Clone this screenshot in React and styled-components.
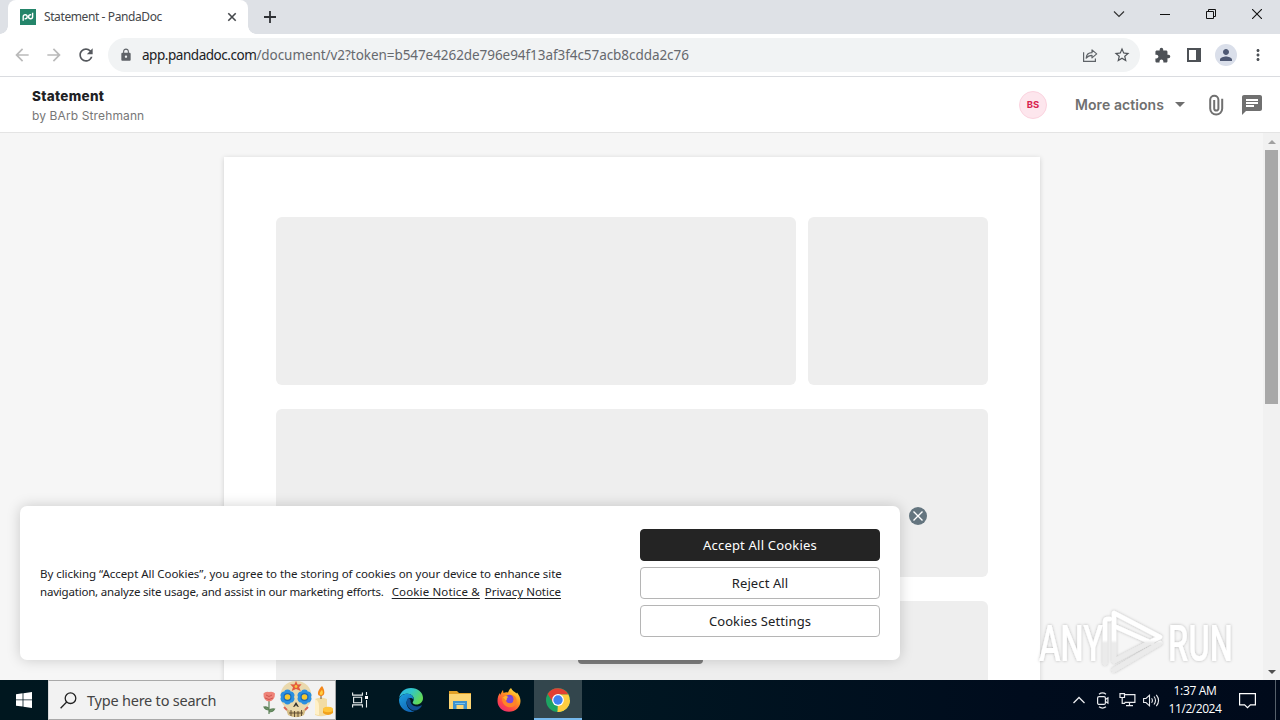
import React from "react";
import styled, { createGlobalStyle } from "styled-components";
import {
  MdArrowBack,
  MdArrowForward,
  MdRefresh,
  MdLock,
  MdStarBorder,
  MdExtension,
  MdPerson,
  MdMoreVert,
  MdChat,
} from "react-icons/md";

const GlobalStyle = createGlobalStyle`
  * {
    box-sizing: border-box;
  }
  body {
    margin: 0;
    overflow: hidden;
    font-family: "Noto Sans", "Open Sans", sans-serif;
  }
  svg {
    display: block;
    flex: none;
  }
`;

const Screen = styled.div`
  position: relative;
  width: 1280px;
  height: 720px;
  display: flex;
  flex-direction: column;
  overflow: hidden;
  background: #fff;
`;

// Single line of text, spacing differs from one label to the next
const Label = styled.span`
  display: block;
  margin: 0;
  white-space: pre;
  flex: none;
  font-size: ${(p) => p.$size || 12}px;
  line-height: ${(p) => p.$line || 16}px;
  letter-spacing: ${(p) => p.$spacing || 0}px;
  color: ${(p) => p.$color || "#202124"};
  font-weight: ${(p) => p.$weight || 400};
`;

/* ---------- Browser ---------- */

const TabStrip = styled.div`
  height: 34px;
  flex: none;
  display: flex;
  align-items: stretch;
  justify-content: space-between;
  background: #dee1e6;
  padding-left: 8px;
`;

const TabGroup = styled.div`
  display: flex;
  align-items: center;
`;

const Tab = styled.div`
  position: relative;
  width: 240px;
  height: 34px;
  display: flex;
  align-items: center;
  padding: 0 10px 0 12px;
  background: #fff;
  border-radius: 8px 8px 0 0;
  &::before,
  &::after {
    content: "";
    position: absolute;
    bottom: 0;
    width: 8px;
    height: 8px;
  }
  &::before {
    left: -8px;
    background: radial-gradient(circle at 0 0, transparent 7.5px, #fff 8px);
  }
  &::after {
    right: -8px;
    background: radial-gradient(circle at 100% 0, transparent 7.5px, #fff 8px);
  }
`;

const TabTitle = styled.div`
  flex: 1;
  padding-left: 8px;
`;

const NewTab = styled.div`
  margin-left: 15px;
`;

const WindowButtons = styled.div`
  display: flex;
  align-items: center;
  height: 28px;
  & > div {
    width: 46px;
    display: flex;
    justify-content: center;
  }
`;

const Toolbar = styled.div`
  height: 43px;
  flex: none;
  display: flex;
  align-items: center;
  border-bottom: 1px solid #dadce0;
  background: #fff;
`;

const NavButtons = styled.div`
  display: flex;
  gap: 12px;
  width: 108px;
  padding-left: 12px;
`;

const AddressBar = styled.div`
  width: 1032px;
  height: 34px;
  border-radius: 17px;
  background: #f1f3f4;
  display: flex;
  align-items: center;
  padding: 0 9px 0 11px;
`;

const Url = styled.div`
  display: flex;
  flex: 1;
  padding-left: 9px;
`;

const AddressActions = styled.div`
  display: flex;
  align-items: center;
  gap: 15px;
`;

const ToolbarActions = styled.div`
  flex: 1;
  display: grid;
  grid-template-columns: repeat(4, 32px);
  align-items: center;
  justify-items: center;
  padding-left: 6px;
`;

const Profile = styled.div`
  width: 22px;
  height: 22px;
  border-radius: 50%;
  background: #dadfea;
  display: flex;
  align-items: center;
  justify-content: center;
`;

/* ---------- Document ---------- */

const Header = styled.header`
  height: 56px;
  flex: none;
  display: flex;
  align-items: center;
  justify-content: space-between;
  padding: 0 16px 0 32px;
  border-bottom: 1px solid #e4e4e4;
  background: #fff;
  font-family: Inter, "Noto Sans", sans-serif;
`;

const HeaderTitle = styled.div`
  display: flex;
  flex-direction: column;
  gap: 3px;
  padding-top: 3px;
`;

const HeaderActions = styled.div`
  display: flex;
  align-items: center;
`;

const Avatar = styled.div`
  width: 28px;
  height: 28px;
  border-radius: 50%;
  border: 1px solid #fbd3df;
  background: #fde6ed;
  display: flex;
  align-items: center;
  justify-content: center;
  margin-right: 28px;
`;

const ActionsLabel = styled.div`
  width: 89px;
`;

const Caret = styled.div`
  border: 5px solid transparent;
  border-top-color: #6e6e6e;
  border-bottom: 0;
  margin: 0 21px 0 11px;
`;

const Clip = styled.div`
  margin-right: 14px;
`;

const Viewport = styled.main`
  height: 547px;
  flex: none;
  display: flex;
  background: #f6f6f6;
  overflow: hidden;
`;

const Canvas = styled.div`
  flex: 1;
  display: flex;
  justify-content: center;
  align-items: flex-start;
  padding: 24px 0 0 1px;
`;

const Sheet = styled.div`
  width: 816px;
  height: 1056px;
  padding: 60px 52px;
  background: #fff;
  box-shadow: 0 1px 5px rgba(0, 0, 0, 0.16);
  display: flex;
  flex-direction: column;
  gap: 24px;
`;

const SkeletonRow = styled.div`
  display: flex;
  gap: 12px;
`;

const Skeleton = styled.div`
  width: ${(p) => p.$width}px;
  height: 168px;
  border-radius: 6px;
  background: #eee;
`;

const Scrollbar = styled.div`
  width: 17px;
  background: #f1f1f1;
  display: flex;
  flex-direction: column;
  align-items: center;
`;

const ScrollArrow = styled.div`
  height: 17px;
  display: flex;
  align-items: center;
`;

const Thumb = styled.div`
  width: 13px;
  height: 254px;
  margin-bottom: auto;
  background: #a8a8a8;
`;

/* ---------- Overlays ---------- */

const Toast = styled.div`
  position: absolute;
  left: 578px;
  top: 624px;
  width: 125px;
  height: 40px;
  border-radius: 4px;
  background: #7d7d7d;
`;

const CookieBanner = styled.section`
  position: absolute;
  left: 20px;
  top: 506px;
  width: 880px;
  height: 154px;
  border-radius: 7px;
  background: #fff;
  box-shadow: 0 0 14px rgba(0, 0, 0, 0.18);
  display: flex;
  justify-content: space-between;
  padding: 23px 20px;
`;

const CookieText = styled.div`
  padding-top: 36px;
`;

const CookieLine = styled.div`
  display: flex;
`;

const CookieLink = styled(Label)`
  margin-left: ${(p) => p.$gap}px;
  text-decoration: underline;
  text-underline-offset: 2px;
`;

const CookieButtons = styled.div`
  display: flex;
  flex-direction: column;
  gap: 6px;
`;

const CookieButton = styled.button`
  width: 240px;
  height: 32px;
  padding: 0;
  border: 1px solid ${(p) => (p.$dark ? "#242424" : "#b5b5b5")};
  border-radius: 4px;
  background: ${(p) => (p.$dark ? "#242424" : "#fff")};
  font-family: inherit;
  display: flex;
  align-items: center;
  justify-content: center;
`;

const CloseBadge = styled.div`
  position: absolute;
  left: 909px;
  top: 507px;
`;

const Watermark = styled.div`
  position: absolute;
  left: 1030px;
  top: 602px;
`;

/* ---------- Taskbar ---------- */

const Taskbar = styled.footer`
  height: 40px;
  flex: none;
  display: flex;
  background: linear-gradient(90deg, #00171f 0%, #001722 45%, #000c1d 80%, #000a1b 100%);
`;

const TaskButton = styled.div`
  width: ${(p) => p.$width || 49}px;
  height: 40px;
  display: flex;
  align-items: center;
  justify-content: center;
  background: ${(p) => (p.$active ? "#33464d" : "transparent")};
  border-bottom: ${(p) => (p.$active ? "2px solid #76b9ed" : "2px solid transparent")};
  padding-top: 2px;
`;

const SearchBox = styled.div`
  width: 288px;
  height: 40px;
  background: #f2f2f2;
  border: 1px solid #a9a9a9;
  border-left-color: #d8d8d8;
  display: flex;
  align-items: center;
  padding-left: 11px;
  overflow: hidden;
`;

const SearchText = styled.div`
  width: 185px;
  flex: none;
  padding-left: 10px;
`;

const Tray = styled.div`
  margin-left: auto;
  display: flex;
  align-items: center;
`;

const Clock = styled.div`
  width: 64px;
  height: 36px;
  display: flex;
  flex-direction: column;
  align-items: center;
  font-family: "Open Sans", "Noto Sans", sans-serif;
`;

const TrayIcons = styled.div`
  display: grid;
  grid-template-columns: repeat(4, 24px);
  align-items: center;
  justify-items: center;
`;

const Notifications = styled.div`
  width: 40px;
  display: flex;
  justify-content: center;
  margin-right: 8px;
`;

const ShowDesktop = styled.div`
  width: 5px;
  height: 40px;
  border-left: 1px solid #56606b;
`;

/* ---------- Drawings ---------- */

const PandaLogo = () => (
  <svg width="16" height="16" viewBox="0 0 16 16" fill="none">
    <rect width="16" height="16" fill="#24856a" />
    <path d="M3.2 11.800V7.700a2 2 0 1 1 2 2H4.600M12.600 3.800v3.900a2 2 0 1 1-2-2h.6" stroke="#fff" strokeWidth="1.400" />
  </svg>
);

const TabClose = () => (
  <svg width="12" height="12" viewBox="0 0 12 12">
    <path d="M2.300 2.300l7.400 7.400M9.700 2.300L2.300 9.700" stroke="#45484c" strokeWidth="1.600" />
  </svg>
);

const Plus = () => (
  <svg width="14" height="14" viewBox="0 0 14 14">
    <path d="M7 1v12M1 7h12" stroke="#2f3135" strokeWidth="1.800" />
  </svg>
);

const ShareIcon = () => (
  <svg width="16" height="16" viewBox="0 0 16 16" fill="none" stroke="#5f6368" strokeWidth="1.200">
    <path d="M1.600 5.200v9.200h11.800v-3" />
    <path d="M4.200 11.200c.2-3.600 2.400-5.400 5.800-5.500V2.900l4.700 4-4.700 4V8.300c-2.400 0-4.300.8-5.800 2.900z" strokeLinejoin="round" />
  </svg>
);

const PanelIcon = () => (
  <svg width="14" height="14" viewBox="0 0 14 14">
    <path d="M1 1h12v12H1z" fill="none" stroke="#4d5156" strokeWidth="2" />
    <path d="M9 1h4v12H9z" fill="#4d5156" />
  </svg>
);

const PaperClip = () => (
  <svg width="20" height="24" viewBox="0 0 20 24" fill="none" stroke="#707070" strokeWidth="2">
    <path d="M16.200 5.800v9.800a6 6 0 0 1-12 0V6.800a4.100 4.100 0 0 1 8.200 0v8.700a2.100 2.100 0 0 1-4.200 0V7" />
  </svg>
);

const WindowsLogo = () => (
  <svg width="16" height="16" viewBox="0 0 16 16" fill="#fff">
    <path d="M0 2.200l6.600-.9v6.200H0zM7.400 1.200L16 0v7.500H7.400zM0 8.300h6.600v6.300L0 13.700zM7.400 8.300H16V16l-8.600-1.200z" />
  </svg>
);

const SearchIcon = () => (
  <svg width="17" height="17" viewBox="0 0 17 17" fill="none" stroke="#222" strokeWidth="1.300">
    <circle cx="10.500" cy="6.200" r="5.300" />
    <path d="M6.700 10L.6 16.200" />
  </svg>
);

const petals = [0, 60, 120, 180, 240, 300];

const Flower = ({ x, y }) => (
  <g transform={`translate(${x} ${y})`}>
    {petals.map((a) => (
      <circle key={a} cx="0" cy="-4" r="3.400" fill="#2a8fe0" transform={`rotate(${a})`} />
    ))}
    <circle r="4" fill="#1868b8" />
    <circle r="2.800" fill="#f6c72c" />
  </g>
);

const SkullArt = () => (
  <svg width="74" height="38" viewBox="0 0 74 38">
    <path d="M7 20v13M7 29c-3 0-4-1-5-3 3-.4 5 .5 5 3zM7 31c3 0 4.500-1 5.500-3-3-.4-5.500.5-5.500 3z" stroke="#5d8158" strokeWidth="1.200" fill="#6f966a" />
    <path d="M1.500 12.500q2-2.500 5.500-1.500 4-1 6 1.500 0 7-6 8-6-1-5.500-8z" fill="#ee8378" />
    <path d="M4 14q3 3 6 0M3 17q4 3 8 0" stroke="#cf554f" fill="none" />
    <path d="M34 0C24 0 18.500 7 18.500 15c0 6 3 10 6.500 12l1.500 7q7.500 4.500 15 0l1.500-7c4-2 6.500-6 6.500-12C49.500 7 44 0 34 0z" fill="#ead9ad" />
    <path d="M24 28q10 5 20 0l-2 6q-8 4-16 0z" fill="#d5bd85" />
    <path d="M29 29v6M32.500 30v6M36 30v6M39.500 29v6M27 32h14" stroke="#59482f" strokeWidth=".9" />
    <Flower x={25.5} y={16} />
    <Flower x={42.5} y={16} />
    <path d="M34 21l-3 5 2-.4 1-1.600 1 1.600 2 .4z" fill="#33302c" />
    <path d="M34 0l1.600 3.500 4-.3-2.500 3 1.700 3.800-4.800-2-4.300 2 1.300-3.800-2.800-3 4.200.3z" fill="#e35b3e" />
    <circle cx="34" cy="5.500" r="1.400" fill="#f8c53b" />
    <path d="M22 26l3 3M46 26l-3 3" stroke="#dc6353" strokeWidth="2" />
    <path d="M53 18q6-3 12 0v16q-6 2.500-12 0z" fill="#f2dca4" />
    <path d="M53 18q4 2 4 7v9q-2 0-4-1z" fill="#fff0c7" />
    <path d="M59 18v-4" stroke="#665039" />
    <path d="M60 5c3 4 3.500 10-1 10s-4-5 1-10z" fill="#f48719" />
    <path d="M60 9c1.500 2 1 5-1 5s-1.500-3 1-5z" fill="#ffd044" />
    <path d="M61 28q5-4 10 0v4q-5 4-10 0z" fill="#f1a11c" />
    <ellipse cx="66" cy="28.500" rx="5" ry="2.700" fill="#ffc43b" />
  </svg>
);

const TaskView = () => (
  <svg width="17" height="16" viewBox="0 0 17 16" fill="none" stroke="#e8eeee" strokeWidth="1.100">
    <path d="M.6.500v2.600h9.800V.500M.6 15.500v-2.600h9.800v2.600M1.600 5.200h8v5.600h-8zM14.500 0v3M14.500 8v7.500" />
    <path d="M13 4h3v3h-3z" fill="#fff" stroke="none" />
  </svg>
);

const EdgeLogo = () => (
  <svg width="24" height="24" viewBox="0 0 24 24">
    <defs>
      <linearGradient id="edgeTop" x1="0" y1="0" x2="1" y2=".5">
        <stop offset="0" stopColor="#2cb4e8" />
        <stop offset=".5" stopColor="#31c6c8" />
        <stop offset="1" stopColor="#62d957" />
      </linearGradient>
      <linearGradient id="edgeSide" x1="0" y1="0" x2=".6" y2="1">
        <stop offset="0" stopColor="#1ca0df" />
        <stop offset="1" stopColor="#1267b7" />
      </linearGradient>
    </defs>
    <path d="M0 11C.500 4.500 5.500 0 12 0c7 0 12 4.500 12 10 0 4-3 6.500-6.500 6.500-3 0-4.500-1.500-3.500-2.700 2.500-4-1-8-5.500-8C4 5.800.500 8 0 11z" fill="url(#edgeTop)" />
    <path d="M0 12C.500 8 4 5.800 8.500 5.800c4 0 6.500 3 6 6-1.500-3-7-2-7 3 0 4 3.500 8.500 8 8.500C8 26 0 20 0 12z" fill="url(#edgeSide)" />
    <path d="M9.500 9.500C6.500 12 7 20 14 22.500c4 .5 7-1.500 8.700-4.500.3-.6-.1-.8-.7-.5C17 20 11 17.500 11.500 12z" fill="#114f93" />
  </svg>
);

const FolderLogo = () => (
  <svg width="22" height="18" viewBox="0 0 22 18">
    <path d="M0 0h8l2 2h12v3H0z" fill="#e2a127" />
    <path d="M0 3h22v15H0z" fill="#fcd573" />
    <path d="M4 10h14v8h-3.500v-4h-7v4H4z" fill="#3e92ce" />
    <path d="M6 12h10v1H6z" fill="#77c4f0" />
  </svg>
);

const FirefoxLogo = () => (
  <svg width="24" height="24" viewBox="0 0 24 24">
    <defs>
      <linearGradient id="fox" x1=".9" y1="0" x2=".2" y2="1">
        <stop offset="0" stopColor="#fff04a" />
        <stop offset=".4" stopColor="#ff9a1f" />
        <stop offset=".75" stopColor="#ff4647" />
        <stop offset="1" stopColor="#e62a76" />
      </linearGradient>
    </defs>
    <path d="M14 0c1 2.500 4 4 5.500 5.500l.5-1C22 7 23.500 10 23.500 13c0 6-5 10.800-11.500 10.800S.500 19 .500 13c0-3.500 1-6.500 2.500-8l.500 2C4 5 5 3 6 2l.5 3c1.500-.8 3-.8 4.500-.4C11.500 3 12.500 1 14 0z" fill="url(#fox)" />
    <circle cx="12.500" cy="12.500" r="5.800" fill="#7543d7" />
    <path d="M5 9c3-1 5-.5 7 1.500l-3 2c1 3 5 3 7 0 1-2 0-4-1.500-5.500C18 7 20 10 19.500 14c-1 4.500-5 6-8.500 5-4-1-6.500-5-6-10z" fill="#ff8427" />
    <path d="M9 12.500l3.500-2c-1-2-2.500-2.500-4.500-2.500L6 9.500z" fill="#ffb52e" />
    <circle cx="13" cy="12" r="3.300" fill="#7a48dc" />
  </svg>
);

const ChromeLogo = () => (
  <svg width="24" height="24" viewBox="0 0 24 24">
    <circle cx="12" cy="12" r="12" fill="#1da462" />
    <path d="M12 12h12A12 12 0 0 1 11.500 24z" fill="#ffcd40" />
    <path d="M1.600 6A12 12 0 0 1 22.400 6.500H12L7.200 14.700z" fill="#e23f33" />
    <path d="M12 6.500h10.400A12 12 0 0 1 11.500 24l5.200-9.200z" fill="#ffcd40" />
    <circle cx="12" cy="12" r="5.900" fill="#fff" />
    <circle cx="12" cy="12" r="4.700" fill="#3e82f1" />
  </svg>
);

const CaptureIcon = () => (
  <svg width="14" height="17" viewBox="0 0 14 17" fill="none" stroke="#e9ebee" strokeWidth="1.200">
    <rect x="1.600" y="4.600" width="7.800" height="7.800" rx="1.500" />
    <path d="M9.500 7.500l2.400-1.700v5.400L9.500 9.500M3 2.200Q6.500-.300 10 2.200M3 14.800q3.500 2.500 7 0" />
  </svg>
);

const NetworkIcon = () => (
  <svg width="17" height="16" viewBox="0 0 17 16" fill="none" stroke="#e9ebee" strokeWidth="1.200">
    <path d="M5.500 2.600h10.400v7.800H5.500M3.200 5.500v5.900h3M10.500 10.500v3M7 13.600h7" />
    <path d="M1 1.600h4.500v3.900H1z" />
  </svg>
);

const VolumeIcon = () => (
  <svg width="17" height="15" viewBox="0 0 17 15" fill="none" stroke="#e9ebee" strokeWidth="1.100">
    <path d="M.6 5.500H3l3.500-3.300v10.600L3 9.500H.6zM8.600 5.200q1.600 2.300 0 4.600M11 3.500q3 4 0 8M13.300 1.800q4.500 5.700 0 11.400" />
  </svg>
);

const NoticeIcon = () => (
  <svg width="17" height="17" viewBox="0 0 17 17" fill="none" stroke="#fff" strokeWidth="1.200">
    <path d="M.6 1.600h15.800v11.200h-5l-2.900 2.800-2.900-2.800h-5z" />
  </svg>
);

const AnyRunMark = () => (
  <svg width="230" height="76" viewBox="0 0 230 76" overflow="visible">
    <defs>
      <filter id="markShadow" x="-10%" y="-10%" width="120%" height="120%">
        <feDropShadow dx="0" dy="0" stdDeviation="1.700" floodColor="#000" floodOpacity=".28" />
      </filter>
      <linearGradient id="markFill" x1="0" y1="0" x2="0" y2="76" gradientUnits="userSpaceOnUse">
        <stop offset=".5" stopColor="#fff" />
        <stop offset=".54" stopColor="#ebebeb" />
      </linearGradient>
    </defs>
    <g filter="url(#markShadow)" fill="url(#markFill)">
      <g fontFamily="Roboto, sans-serif" fontSize="50" fontWeight="500">
        <text transform="translate(9 59) scale(.65 1)">ANY</text>
        <text transform="translate(138 59) scale(.65 1)">RUN</text>
      </g>
      <g fill="none" stroke="url(#markFill)" strokeWidth="4.500" strokeLinejoin="round" strokeLinecap="round">
        <path d="M75 61V20q0-3 3-3h2" />
        <path d="M84 57V24l38 17M84 11l46 24-46 24zM84 68l46-27" />
      </g>
    </g>
  </svg>
);

function Browser() {
  return (
    <>
      <TabStrip>
        <TabGroup>
          <Tab>
            <PandaLogo />
            <TabTitle>
              <Label $size={12} $spacing={-0.4} $color="#45474a">Statement - PandaDoc</Label>
            </TabTitle>
            <TabClose />
          </Tab>
          <NewTab>
            <Plus />
          </NewTab>
        </TabGroup>
        <WindowButtons>
          <div>
            <svg width="12" height="12" viewBox="0 0 12 12" fill="none" stroke="#333">
              <path d="M1 3.500l5 5 5-5" strokeWidth="1.200" />
            </svg>
          </div>
          <div>
            <svg width="10" height="10" viewBox="0 0 10 10" stroke="#111">
              <path d="M0 5.500h10" />
            </svg>
          </div>
          <div>
            <svg width="10" height="10" viewBox="0 0 10 10" fill="none" stroke="#111">
              <path d="M.5 2.500h7v7h-7zM2.500 2.500v-2h7v7h-2" />
            </svg>
          </div>
          <div>
            <svg width="10" height="10" viewBox="0 0 10 10" stroke="#111" strokeWidth="1.100">
              <path d="M0 0l10 10M10 0L0 10" />
            </svg>
          </div>
        </WindowButtons>
      </TabStrip>
      <Toolbar>
        <NavButtons>
          <MdArrowBack size={20} color="#bababa" />
          <MdArrowForward size={20} color="#bababa" />
          <MdRefresh size={20} color="#55585d" />
        </NavButtons>
        <AddressBar>
          <MdLock size={14} color="#5f6368" />
          <Url>
            <Label $size={13.5} $line={20} $spacing={-0.46}>app.pandadoc.com</Label>
            <Label $size={13.5} $line={20} $spacing={-0.06} $color="#66696e">
              /document/v2?token=b547e4262de796e94f13af3f4c57acb8cdda2c76
            </Label>
          </Url>
          <AddressActions>
            <ShareIcon />
            <MdStarBorder size={18} color="#4f5358" />
          </AddressActions>
        </AddressBar>
        <ToolbarActions>
          <MdExtension size={17} color="#4d5156" />
          <PanelIcon />
          <Profile>
            <MdPerson size={18} color="#4e5873" />
          </Profile>
          <MdMoreVert size={18} color="#4d5156" />
        </ToolbarActions>
      </Toolbar>
    </>
  );
}

function DocumentView() {
  return (
    <>
      <Header>
        <HeaderTitle>
          <Label as="h1" $size={13.5} $line={17} $weight={800} $spacing={0.3}>Statement</Label>
          <Label $size={12} $line={16} $spacing={0.12} $color="#777">by BArb Strehmann</Label>
        </HeaderTitle>
        <HeaderActions>
          <Avatar>
            <Label $size={9.5} $line={12} $weight={700} $color="#d8234f">BS</Label>
          </Avatar>
          <ActionsLabel>
            <Label $size={14} $line={20} $weight={600} $spacing={0.08} $color="#707070">More actions</Label>
          </ActionsLabel>
          <Caret />
          <Clip>
            <PaperClip />
          </Clip>
          <MdChat size={24} color="#707070" />
        </HeaderActions>
      </Header>
      <Viewport>
        <Canvas>
          <Sheet>
            <SkeletonRow>
              <Skeleton $width={520} />
              <Skeleton $width={180} />
            </SkeletonRow>
            <Skeleton $width={712} />
            <Skeleton $width={712} />
          </Sheet>
        </Canvas>
        <Scrollbar>
          <ScrollArrow>
            <svg width="8" height="4" viewBox="0 0 8 4">
              <path d="M0 4l4-4 4 4z" fill="#a0a0a0" />
            </svg>
          </ScrollArrow>
          <Thumb />
          <ScrollArrow>
            <svg width="8" height="4" viewBox="0 0 8 4">
              <path d="M0 0l4 4 4-4z" fill="#505050" />
            </svg>
          </ScrollArrow>
        </Scrollbar>
      </Viewport>
    </>
  );
}

function Cookies() {
  return (
    <CookieBanner>
      <CookieText>
        <Label $size={11.5} $line={18} $spacing={-0.04}>
          By clicking “Accept All Cookies”, you agree to the storing of cookies on your device to enhance site
        </Label>
        <CookieLine>
          <Label $size={11.5} $line={18} $spacing={-0.195}>
            navigation, analyze site usage, and assist in our marketing efforts.
          </Label>
          <CookieLink $size={11.5} $line={18} $spacing={0.14} $gap={8}>Cookie Notice &amp;</CookieLink>
          <CookieLink $size={11.5} $line={18} $gap={5}>Privacy Notice</CookieLink>
        </CookieLine>
      </CookieText>
      <CookieButtons>
        <CookieButton $dark>
          <Label $size={13} $spacing={0.2} $color="#fff">Accept All Cookies</Label>
        </CookieButton>
        <CookieButton>
          <Label $size={13} $spacing={0.1}>Reject All</Label>
        </CookieButton>
        <CookieButton>
          <Label $size={13} $spacing={0.1}>Cookies Settings</Label>
        </CookieButton>
      </CookieButtons>
    </CookieBanner>
  );
}

function WindowsTaskbar() {
  return (
    <Taskbar>
      <TaskButton $width={48}>
        <WindowsLogo />
      </TaskButton>
      <SearchBox>
        <SearchIcon />
        <SearchText>
          <Label $size={14.5} $line={20} $spacing={-0.22} $color="#444">Type here to search</Label>
        </SearchText>
        <SkullArt />
      </SearchBox>
      <TaskButton>
        <TaskView />
      </TaskButton>
      <TaskButton $width={52}>
        <EdgeLogo />
      </TaskButton>
      <TaskButton $width={46}>
        <FolderLogo />
      </TaskButton>
      <TaskButton $width={51}>
        <FirefoxLogo />
      </TaskButton>
      <TaskButton $width={48} $active>
        <ChromeLogo />
      </TaskButton>
      <Tray>
        <TrayIcons>
          <svg width="14" height="10" viewBox="0 0 14 10" fill="none" stroke="#e9ebee" strokeWidth="1.300">
            <path d="M1.500 8L7 2.500 12.500 8" />
          </svg>
          <CaptureIcon />
          <NetworkIcon />
          <VolumeIcon />
        </TrayIcons>
        <Clock>
          <Label $size={12} $line={18} $color="#fff" $spacing={-0.35}>1:37 AM</Label>
          <Label $size={12} $line={18} $color="#fff" $spacing={-0.45}>11/2/2024</Label>
        </Clock>
        <Notifications>
          <NoticeIcon />
        </Notifications>
        <ShowDesktop />
      </Tray>
    </Taskbar>
  );
}

function App() {
  return (
    <Screen>
      <GlobalStyle />
      <Browser />
      <DocumentView />
      <WindowsTaskbar />
      <Toast />
      <Cookies />
      <CloseBadge>
        <svg width="18" height="18" viewBox="0 0 18 18">
          <circle cx="9" cy="9" r="9" fill="#64757f" />
          <path d="M4.500 4.500l9 9M13.500 4.500l-9 9" stroke="#fff" strokeWidth="1.400" />
        </svg>
      </CloseBadge>
      <Watermark>
        <AnyRunMark />
      </Watermark>
    </Screen>
  );
}

export default App;
